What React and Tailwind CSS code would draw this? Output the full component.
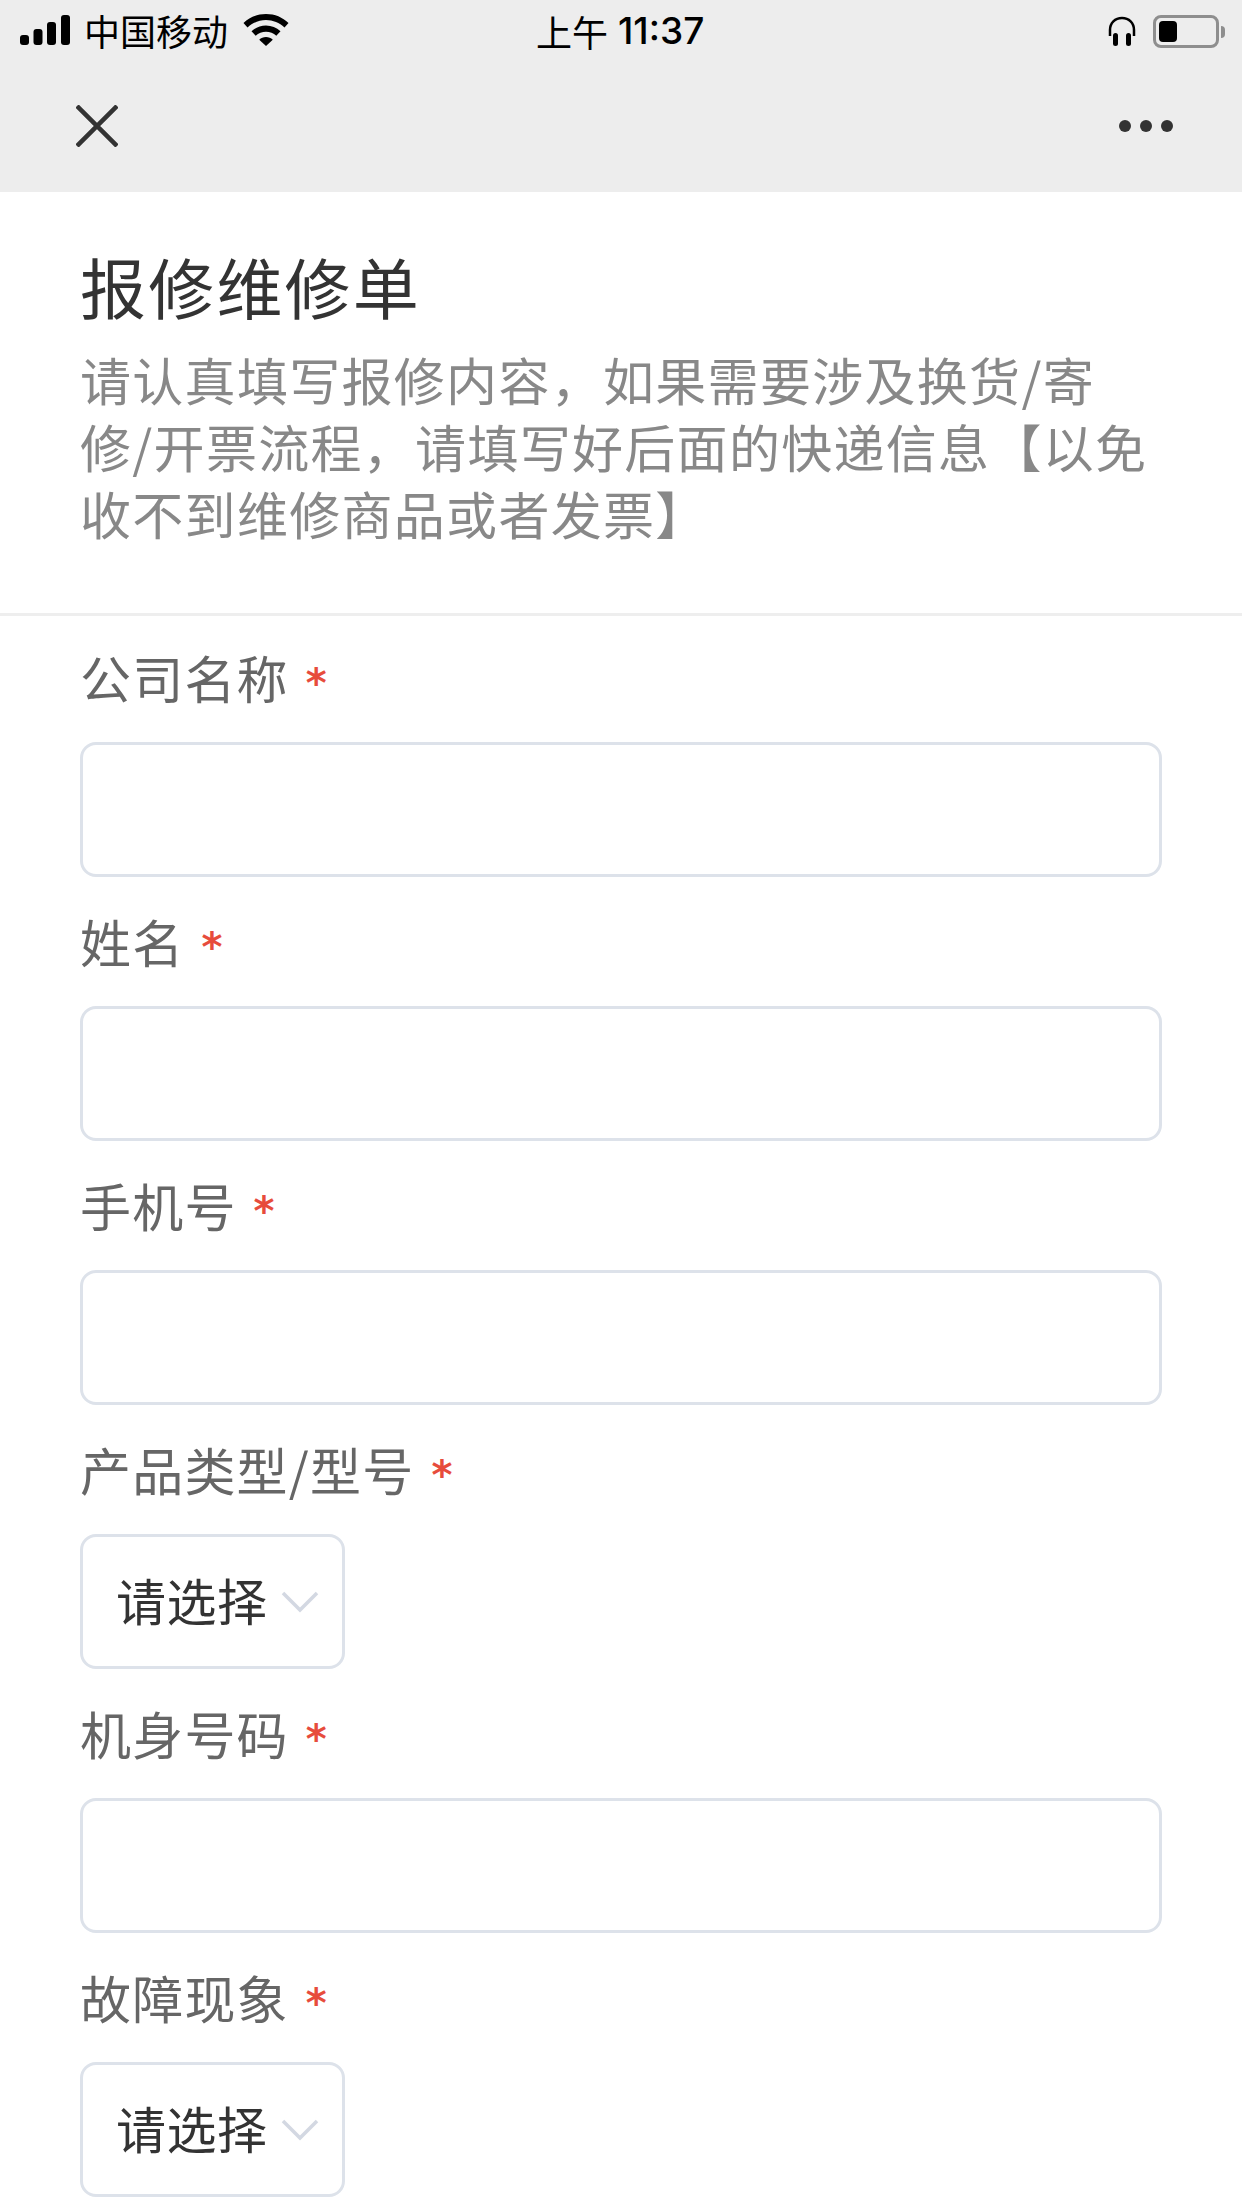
import React from 'react';

const cjk = "font-['Noto_Sans_CJK_SC','Noto_Sans',sans-serif]";

const StatusBar = () => (
  <div className="relative flex h-[60px] items-center text-black">
    <div className="flex items-center pl-[20px]">
      <svg width="50" height="30" viewBox="0 0 50 30" fill="currentColor">
        <rect x="0" y="20" width="9" height="10" rx="3" />
        <rect x="13.5" y="14" width="9" height="16" rx="3" />
        <rect x="27" y="7" width="9" height="23" rx="3" />
        <rect x="41" y="0" width="9" height="30" rx="3" />
      </svg>
      <span className={`ml-[14px] text-[36px] leading-none ${cjk}`}>中国移动</span>
      <svg className="ml-[15px]" width="46" height="32" viewBox="0 0 46 32" fill="currentColor">
        <path d="M23 0C14 0 6.500 3.300 0.500 9L4.500 13.500C9.500 8.800 16 6 23 6s13.500 2.800 18.500 7.500L45.500 9C39.500 3.300 32 0 23 0z" />
        <path d="M23 11.500c-5.500 0-10.500 2.100-14.500 5.800l4.200 4.500c2.800-2.500 6.400-4 10.300-4s7.500 1.500 10.300 4l4.200-4.500c-4-3.700-9-5.800-14.500-5.800z" />
        <path d="M23 23c-2.600 0-5 1-6.800 2.700L23 32l6.800-6.300C28 24 25.600 23 23 23z" />
      </svg>
    </div>
    <div className={`absolute left-[536px] top-[10px] flex items-center text-[36px] leading-[42px] ${cjk}`}>
      <span>上午</span>
      <span className="ml-[10px] font-['Inter',sans-serif] text-[37px] font-medium">11:37</span>
    </div>
    <div className="absolute left-[1108px] top-[15px] flex items-center">
      <svg width="28" height="31" viewBox="0 0 28 31" fill="none">
        <path d="M2 20V14C2 7 7 2 14 2s12 5 12 12v6" stroke="currentColor" strokeWidth="2.500" />
        <rect x="5" y="17" width="5" height="13" rx="2.500" fill="currentColor" />
        <rect x="18" y="17" width="5" height="13" rx="2.500" fill="currentColor" />
      </svg>
      <div className="ml-[17px] flex h-[33px] w-[66px] items-center rounded-[8px] border-[3px] border-[#8e8e8e] p-[3px]">
        <div className="h-full w-[18px] rounded-[4px] bg-black" />
      </div>
      <div className="ml-[2px] h-[12px] w-[4px] rounded-r-full bg-[#8e8e8e]" />
    </div>
  </div>
);

const NavBar = () => (
  <div className="flex h-[132px] items-center justify-between pl-[76px] pr-[69px]">
    <svg width="42" height="42" viewBox="0 0 42 42" stroke="#333" strokeWidth="4.500">
      <path d="M1 1l40 40M41 1L1 41" />
    </svg>
    <div className="flex gap-[9px]">
      <div className="size-[12px] rounded-full bg-[#333]" />
      <div className="size-[12px] rounded-full bg-[#333]" />
      <div className="size-[12px] rounded-full bg-[#333]" />
    </div>
  </div>
);

const Label = ({ text }) => (
  <div className="flex h-[129px] items-start pt-[32px]">
    <span className="text-[51px] leading-[64px] tracking-[1.200px] text-[#666]">{text}</span>
    <span className="ml-[17px] mt-[6px] font-['DejaVu_Sans',sans-serif] text-[40px] font-bold leading-[64px] text-[#e74c3c]">*</span>
  </div>
);

const TextField = ({ label }) => (
  <div>
    <Label text={label} />
    <input className="block h-[135px] w-full rounded-[16px] border-[3px] border-[#dde2ea] bg-white outline-none" />
  </div>
);

const SelectField = ({ label }) => (
  <div>
    <Label text={label} />
    <div className="flex h-[135px] w-[265px] items-center rounded-[16px] border-[3px] border-[#dde2ea] bg-white pl-[33px]">
      <span className="pb-[5px] text-[50px] leading-none tracking-[0.5px] text-[#333]">请选择</span>
      <svg className="ml-[13px]" width="38" height="22" viewBox="0 0 38 22" fill="none" stroke="#d3d8e2" strokeWidth="3.500">
        <path d="M2 2l17 17L36 2" />
      </svg>
    </div>
  </div>
);

export default function App() {
  return (
    <div className={`h-[2208px] w-[1242px] overflow-hidden bg-white ${cjk}`}>
      <div className="bg-[#ededed]">
        <StatusBar />
        <NavBar />
      </div>

      <div className="border-b-[3px] border-[#eeeeee] px-[80px] pb-[66px] pt-[51px]">
        <h1 className="text-[66px] font-normal leading-[84px] tracking-[2.200px] text-[#333]">报修维修单</h1>
        <p className="mr-[6px] mt-[19px] text-[51px] leading-[67px] tracking-[1.300px] text-[#888]">
          请认真填写报修内容，如果需要涉及换货/寄修/开票流程，请填写好后面的快递信息【以免收不到维修商品或者发票】
        </p>
      </div>

      <div className="-mt-[3px] px-[80px]">
        <TextField label="公司名称" />
        <TextField label="姓名" />
        <TextField label="手机号" />
        <SelectField label="产品类型/型号" />
        <TextField label="机身号码" />
        <SelectField label="故障现象" />
      </div>
    </div>
  );
}
